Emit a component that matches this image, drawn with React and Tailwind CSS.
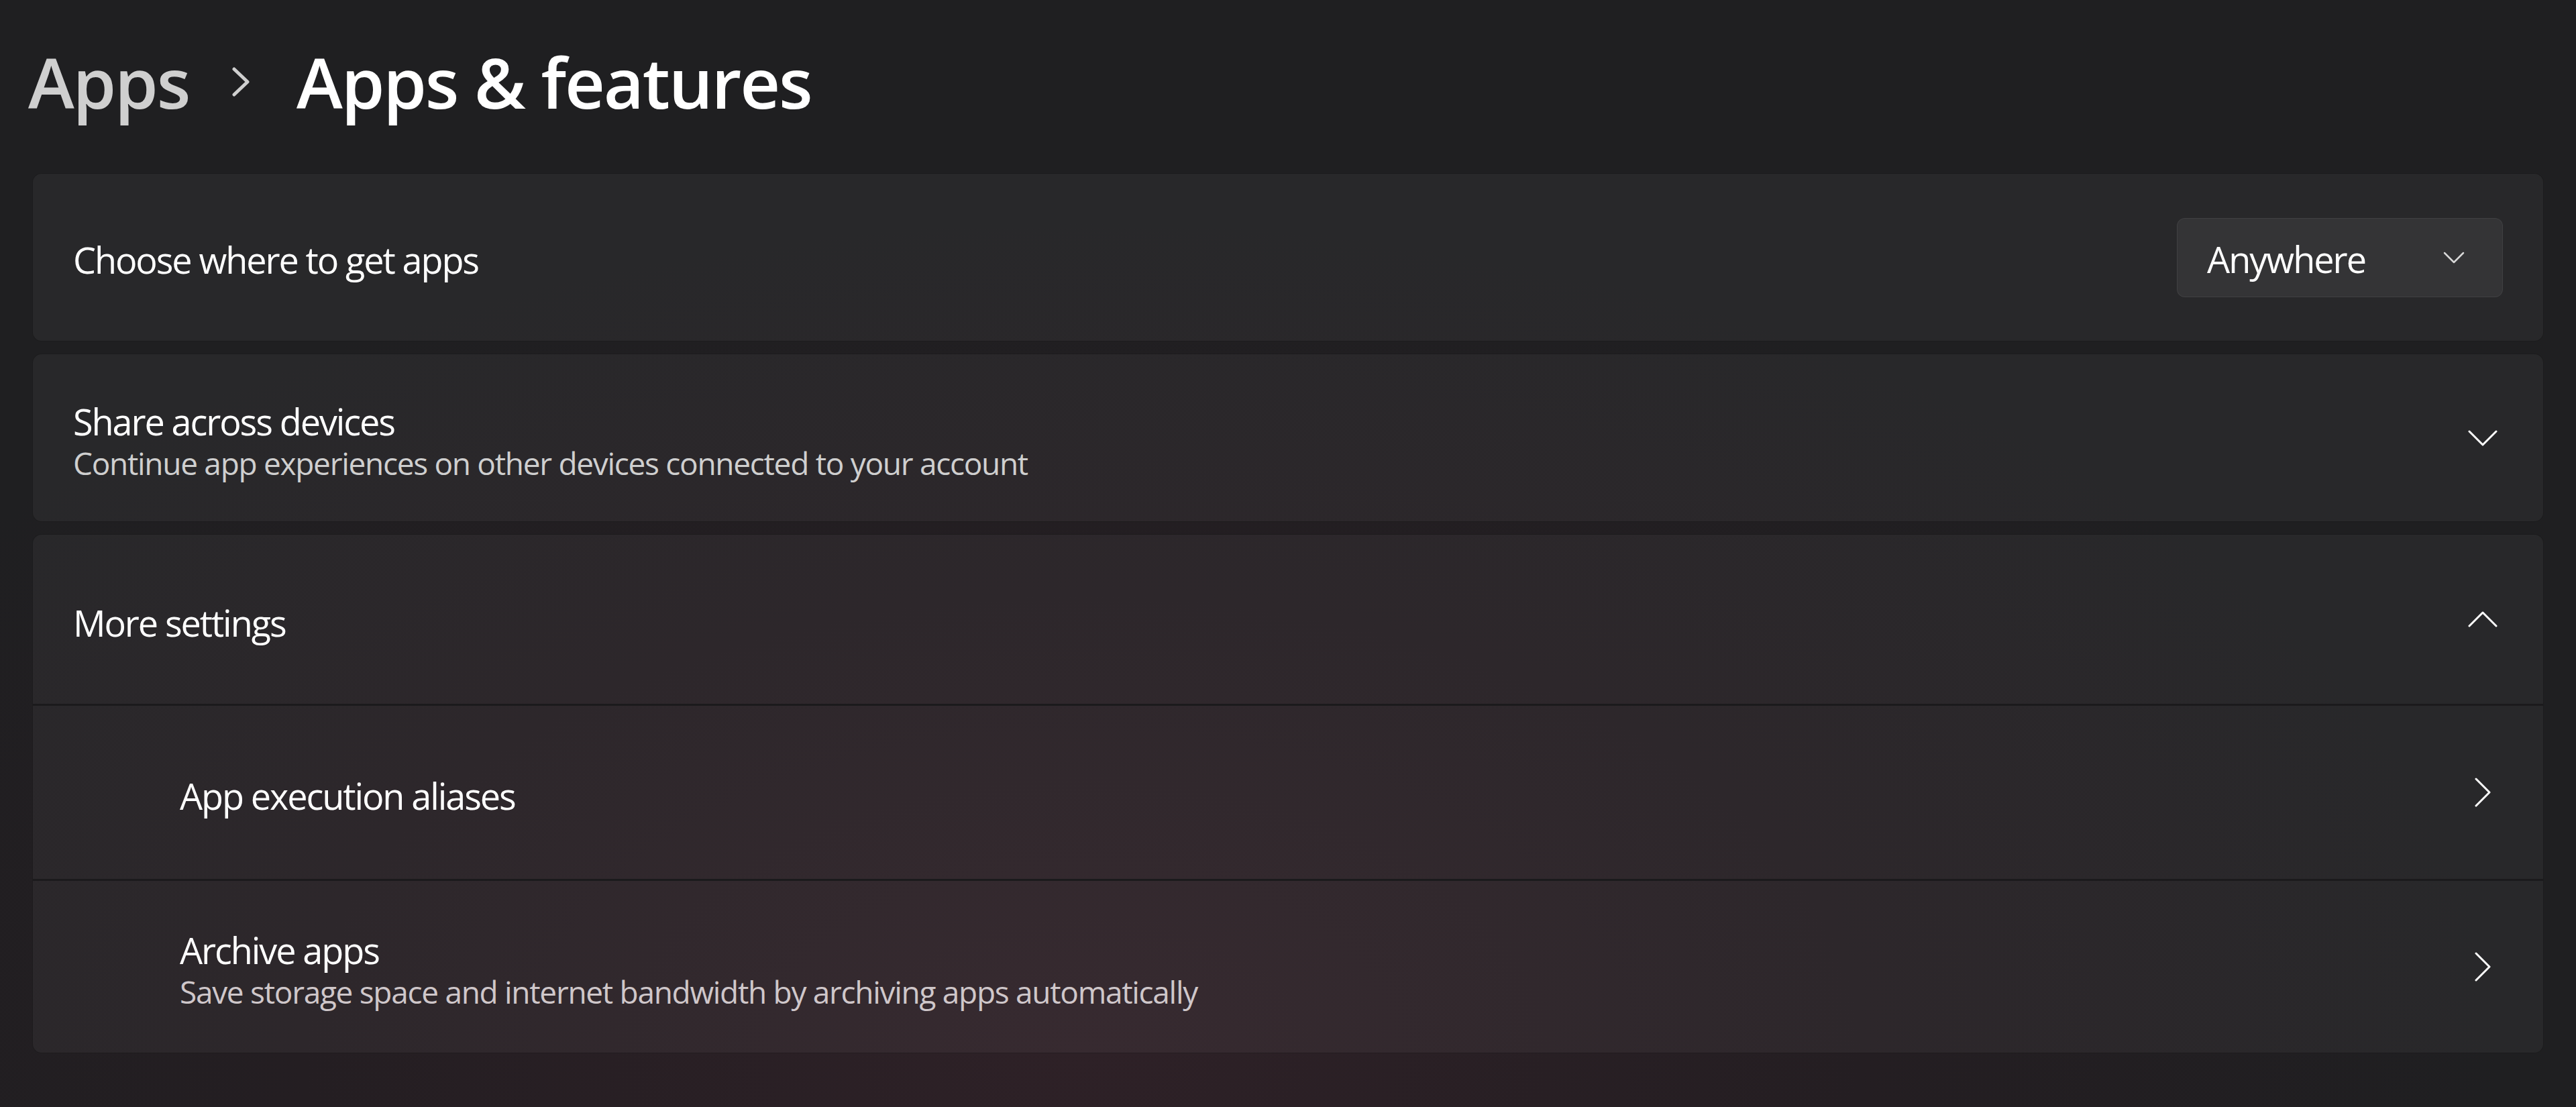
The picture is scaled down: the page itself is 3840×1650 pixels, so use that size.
import React from 'react';

const font = { fontFamily: '"Open Sans", "Noto Sans", sans-serif' };

function ChevronDown({ className = '' }) {
  return (
    <svg width="44" height="26" viewBox="0 0 44 26" className={className} fill="none">
      <polyline points="2,3 22,23 42,3" stroke="currentColor" strokeWidth="3" strokeLinecap="round" strokeLinejoin="round" />
    </svg>
  );
}

function ChevronUp({ className = '' }) {
  return (
    <svg width="44" height="26" viewBox="0 0 44 26" className={className} fill="none">
      <polyline points="2,23 22,3 42,23" stroke="currentColor" strokeWidth="3" strokeLinecap="round" strokeLinejoin="round" />
    </svg>
  );
}

function ChevronRight({ className = '' }) {
  return (
    <svg width="26" height="44" viewBox="0 0 26 44" className={className} fill="none">
      <polyline points="3,2 23,22 3,42" stroke="currentColor" strokeWidth="3" strokeLinecap="round" strokeLinejoin="round" />
    </svg>
  );
}

function SmallChevronDown() {
  return (
    <svg width="32" height="18" viewBox="0 0 32 18" fill="none" className="text-[#d8d8d8]">
      <polyline points="2,2 16,16 30,2" stroke="currentColor" strokeWidth="2.5" strokeLinecap="round" strokeLinejoin="round" />
    </svg>
  );
}

function IconSlot({ children }) {
  return <div className="flex w-[60px] shrink-0 items-center justify-center text-white">{children}</div>;
}

export default function App() {
  return (
    <div
      style={font}
      className="h-[1650px] w-full overflow-hidden bg-[#201f22] bg-[radial-gradient(ellipse_55%_75%_at_42%_95%,#2e2127_0%,#241e22_55%,#1f1f21_100%)] px-[48px] pt-[70px] text-white"
    >
      {/* breadcrumb header */}
      <div className="-ml-[6px] flex items-center text-[104px] font-semibold leading-none tracking-[-2.2px]">
        <span className="text-[#cfcfcf]">Apps</span>
        <span className="ml-[62px] mr-[68px] flex items-center text-[#cfcfcf]">
          <svg width="30" height="44" viewBox="0 0 30 44" fill="none">
            <polyline points="5,3 25,22 5,41" stroke="currentColor" strokeWidth="5" strokeLinecap="round" strokeLinejoin="round" />
          </svg>
        </span>
        <span>Apps &amp; features</span>
      </div>

      <div className="mt-[84px] flex flex-col gap-[18px]">
        {/* Choose where to get apps */}
        <div className="flex h-[251px] items-center rounded-[14px] border border-black/30 bg-white/[0.045] pl-[60px] pr-[60px]">
          <div className="flex-1 pt-[6px] text-[54px] leading-[64px] tracking-[-2.1px]">Choose where to get apps</div>
          <div className="flex h-[118px] w-[486px] items-center justify-between rounded-[12px] border border-white/[0.06] bg-white/[0.06] pl-[44px] pr-[56px]">
            <span className="pt-[4px] text-[54px] leading-[64px] tracking-[-2px]">Anywhere</span>
            <SmallChevronDown />
          </div>
        </div>

        {/* Share across devices */}
        <div className="flex h-[251px] items-center rounded-[14px] border border-black/30 bg-white/[0.045] pl-[60px] pr-[60px]">
          <div className="flex flex-1 flex-col pt-[8px]">
            <div className="text-[54px] leading-[64px] tracking-[-2.1px]">Share across devices</div>
            <div className="mt-[2px] text-[46px] leading-[56px] tracking-[-1.3px] text-[#cfcfcf]">
              Continue app experiences on other devices connected to your account
            </div>
          </div>
          <IconSlot>
            <ChevronDown />
          </IconSlot>
        </div>

        {/* More settings */}
        <div className="flex flex-col overflow-hidden rounded-[14px] border border-black/30 bg-white/[0.045]">
          <div className="flex h-[252px] items-center pl-[60px] pr-[60px]">
            <div className="flex-1 pt-[10px] text-[54px] leading-[64px] tracking-[-2.1px]">More settings</div>
            <IconSlot>
              <ChevronUp />
            </IconSlot>
          </div>
          <div className="h-[3px] bg-[#1b1a1c]" />
          <div className="flex h-[258px] items-center pl-[219px] pr-[60px]">
            <div className="flex-1 pt-[10px] text-[54px] leading-[64px] tracking-[-2.1px]">App execution aliases</div>
            <IconSlot>
              <ChevronRight />
            </IconSlot>
          </div>
          <div className="h-[3px] bg-[#1b1a1c]" />
          <div className="flex h-[256px] items-center pl-[219px] pr-[60px]">
            <div className="flex flex-1 flex-col pt-[8px]">
              <div className="text-[54px] leading-[64px] tracking-[-2.1px]">Archive apps</div>
              <div className="mt-[2px] text-[46px] leading-[56px] tracking-[-1.3px] text-[#cfc7ca]">
                Save storage space and internet bandwidth by archiving apps automatically
              </div>
            </div>
            <IconSlot>
              <ChevronRight />
            </IconSlot>
          </div>
        </div>
      </div>
    </div>
  );
}
